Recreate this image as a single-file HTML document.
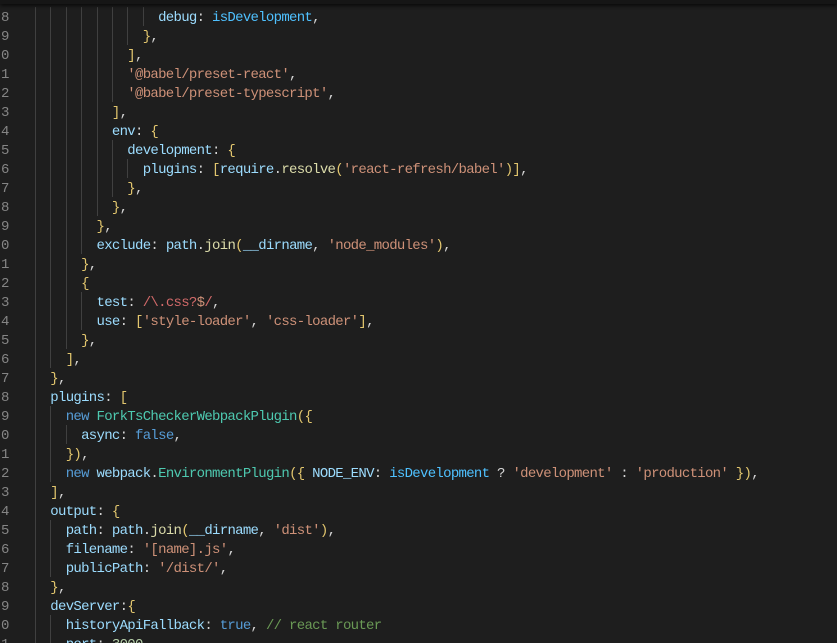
<!DOCTYPE html>
<html><head><meta charset="utf-8"><style>
html,body{margin:0;padding:0;background:#1e1e1e;width:837px;height:643px;overflow:hidden;position:relative}
.top{position:absolute;left:0;top:0;width:837px;height:4px;background:#161616;box-shadow:0 1px 5px #000;z-index:5}
.l{position:absolute;left:19.5px;height:19px;line-height:19px;font-family:"Liberation Mono",monospace;font-size:14px;letter-spacing:-0.7px;white-space:pre;color:#d4d4d4}
.n{position:absolute;left:1px;height:19px;line-height:19px;font-family:"Liberation Mono",monospace;font-size:14px;color:#858585}
.g{position:absolute;width:1px;height:19px;background:#404040}
.p{color:#9cdcfe}.s{color:#ce9178}.k{color:#569cd6}.c{color:#4ec9b0}.f{color:#dcdcaa}.v{color:#4fc1ff}.b{color:#e2c66e}.m{color:#6a9955}.r{color:#d16969}
</style></head><body>
<div class="top"></div>
<div id="code">
<div class="l" data-i="18"><span class="p">debug</span>: <span class="v">isDevelopment</span>,</div>
<div class="l" data-i="16"><span class="b">}</span>,</div>
<div class="l" data-i="14"><span class="b">]</span>,</div>
<div class="l" data-i="14"><span class="s">'@babel/preset-react'</span>,</div>
<div class="l" data-i="14"><span class="s">'@babel/preset-typescript'</span>,</div>
<div class="l" data-i="12"><span class="b">]</span>,</div>
<div class="l" data-i="12"><span class="p">env</span>: <span class="b">{</span></div>
<div class="l" data-i="14"><span class="p">development</span>: <span class="b">{</span></div>
<div class="l" data-i="16"><span class="p">plugins</span>: <span class="b">[</span><span class="p">require</span>.<span class="f">resolve</span><span class="b">(</span><span class="s">'react-refresh/babel'</span><span class="b">)]</span>,</div>
<div class="l" data-i="14"><span class="b">}</span>,</div>
<div class="l" data-i="12"><span class="b">}</span>,</div>
<div class="l" data-i="10"><span class="b">}</span>,</div>
<div class="l" data-i="10"><span class="p">exclude</span>: <span class="p">path</span>.<span class="f">join</span><span class="b">(</span><span class="p">__dirname</span>, <span class="s">'node_modules'</span><span class="b">)</span>,</div>
<div class="l" data-i="8"><span class="b">}</span>,</div>
<div class="l" data-i="8"><span class="b">{</span></div>
<div class="l" data-i="10"><span class="p">test</span>: <span class="r">/\.css?</span><span class="s">$</span><span class="r">/</span>,</div>
<div class="l" data-i="10"><span class="p">use</span>: <span class="b">[</span><span class="s">'style-loader'</span>, <span class="s">'css-loader'</span><span class="b">]</span>,</div>
<div class="l" data-i="8"><span class="b">}</span>,</div>
<div class="l" data-i="6"><span class="b">]</span>,</div>
<div class="l" data-i="4"><span class="b">}</span>,</div>
<div class="l" data-i="4"><span class="p">plugins</span>: <span class="b">[</span></div>
<div class="l" data-i="6"><span class="k">new</span> <span class="c">ForkTsCheckerWebpackPlugin</span><span class="b">({</span></div>
<div class="l" data-i="8"><span class="p">async</span>: <span class="k">false</span>,</div>
<div class="l" data-i="6"><span class="b">})</span>,</div>
<div class="l" data-i="6"><span class="k">new</span> <span class="p">webpack</span>.<span class="c">EnvironmentPlugin</span><span class="b">({</span> <span class="p">NODE_ENV</span>: <span class="v">isDevelopment</span> ? <span class="s">'development'</span> : <span class="s">'production'</span> <span class="b">})</span>,</div>
<div class="l" data-i="4"><span class="b">]</span>,</div>
<div class="l" data-i="4"><span class="p">output</span>: <span class="b">{</span></div>
<div class="l" data-i="6"><span class="p">path</span>: <span class="p">path</span>.<span class="f">join</span><span class="b">(</span><span class="p">__dirname</span>, <span class="s">'dist'</span><span class="b">)</span>,</div>
<div class="l" data-i="6"><span class="p">filename</span>: <span class="s">'[name].js'</span>,</div>
<div class="l" data-i="6"><span class="p">publicPath</span>: <span class="s">'/dist/'</span>,</div>
<div class="l" data-i="4"><span class="b">}</span>,</div>
<div class="l" data-i="4"><span class="p">devServer</span>:<span class="b">{</span></div>
<div class="l" data-i="6"><span class="p">historyApiFallback</span>: <span class="k">true</span>, <span class="m">// react router</span></div>
<div class="l" data-i="6"><span class="p">port</span>: <span style="color:#b5cea8">3000</span>,</div>
</div>
<script>
var ls=document.querySelectorAll('.l'),nums="8901234567890123456789012345678901";
var cw=7.7;
ls.forEach(function(el,k){
  var top=8.5+k*19, ind=+el.getAttribute('data-i');
  el.style.top=top+'px';
  el.style.paddingLeft=(ind*cw)+'px';
  var n=document.createElement('div');n.className='n';n.style.top=top+'px';n.textContent=nums[k];document.body.appendChild(n);
  for(var c=2;c<ind;c+=2){var g=document.createElement('div');g.className='g';g.style.top=(top-2)+'px';g.style.left=Math.round(19.5+c*cw)+'px';document.body.appendChild(g);}
});
</script>
</body></html>
